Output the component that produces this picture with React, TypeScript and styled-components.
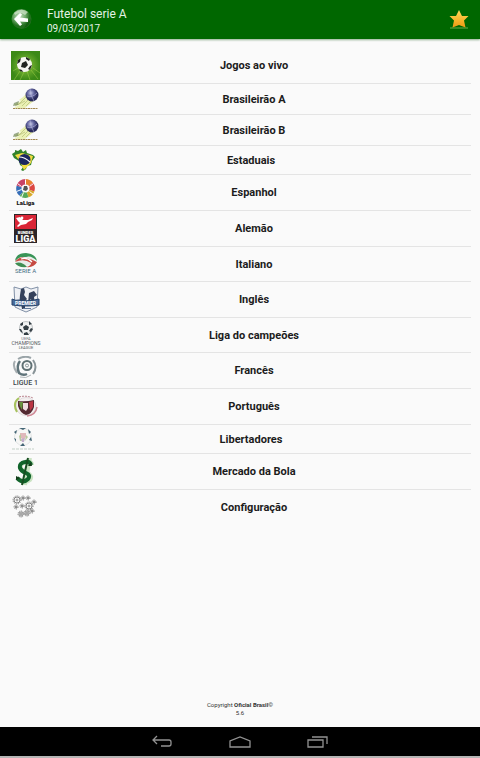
import React from "react";
import styled, { createGlobalStyle } from "styled-components";

const GlobalStyle = createGlobalStyle`
  * { box-sizing: border-box; }
  body { margin: 0; background: #fafafa; font-family: Roboto, "Liberation Sans", sans-serif; color: #1c1c1c; }
  button { border: 0; padding: 0; background: none; font: inherit; color: inherit; cursor: pointer; }
  svg { display: block; }
`;

const Screen = styled.div`
  min-height: 100vh;
  display: flex;
  flex-direction: column;
`;

const TopBar = styled.header`
  display: flex;
  align-items: center;
  height: 39px;
  padding: 0 10px;
  background: #006700;
  color: #e4f2e4;
  box-shadow: 0 1px 2px #8fae8f;
`;

const Titles = styled.div`
  flex: 1;
  padding: 2px 0 0 13px;
`;

const Title = styled.h1`
  margin: 0;
  font-size: 12px;
  line-height: 15px;
  font-weight: 400;
`;

const DateLine = styled.p`
  margin: 0;
  font-size: 10px;
  line-height: 13px;
`;

const Menu = styled.ul`
  list-style: none;
  margin: 9px 9px 0;
  padding: 0;
`;

const MenuItem = styled.li`
  border-bottom: 1px solid #e4e4e4;
  &:last-child { border-bottom-color: transparent; }
`;

const MenuButton = styled.button`
  display: flex;
  align-items: center;
  width: 100%;
  padding: 3px 4px 3px 2px;
`;

const Label = styled.span`
  flex: 1;
  padding-top: 1px;
  font-size: 11px;
  line-height: 16px;
  font-weight: 700;
  text-align: center;
`;

const Footer = styled.footer`
  margin-top: auto;
  padding-bottom: 10px;
  font-size: 6px;
  line-height: 8px;
  text-align: center;
  color: #333;
  p { margin: 0; }
`;

const NavBar = styled.nav`
  display: flex;
  justify-content: center;
  align-items: center;
  gap: 54px;
  height: 31px;
  background: #000;
  border-bottom: 2px solid #b5b5b5;
`;

const BackBall = () => (
  <svg width="24" height="24" viewBox="0 0 24 24" aria-hidden="true">
    <defs>
      <radialGradient id="ball" cx="40%" cy="35%">
        <stop offset="0" stopColor="#c6dfc2" />
        <stop offset="0.6" stopColor="#6ea86a" />
        <stop offset="1" stopColor="#23701f" />
      </radialGradient>
    </defs>
    <circle cx="11.5" cy="11" r="10" fill="url(#ball)" />
    <path d="M4 5Q11 -1 18 4L15 7Q10 3 5 7Z" fill="#d5e8d0" opacity=".7" />
    <path d="M17 15L21 11Q20 18 14 20Z" fill="#074d08" opacity=".5" />
    <path d="M4 11L10 5L12 6.5L10 9.5L18 10.5V14L10 13.5L12 16.5L10 18Z" fill="#fff" />
  </svg>
);

const Star = () => (
  <svg width="22" height="22" viewBox="0 0 22 22" aria-hidden="true">
    <defs>
      <linearGradient id="gold" x2="0" y2="1">
        <stop stopColor="#ffd95e" />
        <stop offset=".6" stopColor="#f7b42a" />
        <stop offset="1" stopColor="#ee9a14" />
      </linearGradient>
    </defs>
    <path d="M2 19H20" stroke="#479532" strokeWidth="1.5" />
    <path d="M11 1L14 7H20.5L16 11.5L17.5 18.5L11 16L4.500 18.500L6 11.5L1.500 7H8Z" fill="url(#gold)" />
  </svg>
);

const LiveBall = () => (
  <>
    <defs>
      <radialGradient id="grass">
        <stop stopColor="#8fc63d" />
        <stop offset="1" stopColor="#3c8917" />
      </radialGradient>
    </defs>
    <path d="M0 0H29V29H0Z" fill="url(#grass)" />
    <path d="M3 29L9 20M9 29L13 21M19 29L16 20M27 28L20 19M2 20L7 17M29 22L22 17" stroke="#a2cf48" opacity=".5" />
    <circle cx="13.5" cy="13.5" r="7.5" fill="#f5f6f0" />
    <path d="M11 12L15 10L17 14L14 17L10 16Z M7 9L10 7L9 11L6 13Z M15 6L19 8L18 10L15 8Z M19 15L21 14L19 19L17 18Z M8 18L11 19L12 21L9 20Z" fill="#20251f" />
  </>
);

const BrasileiraoLogo = ({ id }: { id: string }) => (
  <>
    <defs>
      <radialGradient id={id} cx="40%" cy="35%">
        <stop stopColor="#c4c7e4" />
        <stop offset=".5" stopColor="#6668a2" />
        <stop offset="1" stopColor="#2a2b5c" />
      </radialGradient>
    </defs>
    <path d="M16 6L12 10L8 13L10 14L3 18L8 18L3 21H14L23 14Z" fill="#eaf0b4" />
    <path d="M15 10L7 18M18 12L11 19M14 14L4 19M20 14L15 19" stroke="#b3bd74" strokeWidth=".7" />
    <path d="M3 16L8 14L7 18L2 19Z" fill="#718755" opacity=".7" />
    <circle cx="21" cy="8" r="6.5" fill={`url(#${id})`} />
    <path d="M16 9Q21 11 26 6M19 2Q19 8 23 14" fill="none" stroke="#b8bbdf" strokeWidth=".6" />
    <path d="M2 21.5H27" stroke="#a38950" strokeWidth="1.2" strokeDasharray="2 .5" />
  </>
);

const BrazilMap = () => (
  <>
    <path d="M1 5L4 3V1L7 2L10 0L12 3L15 1L16 4L22 6L24 8L21 12L20 16L16 17L15 20L12 22L10 21L12 18L9 16L8 12L3 9Z" fill="#31822b" />
    <path d="M4 6L11 4L22 7L20 14L13 21L10 15L8 11Z" fill="#f2dc3e" />
    <ellipse cx="13.5" cy="10.5" rx="6" ry="5.5" fill="#1b285f" />
    <path d="M8 8Q14 8 19 13" fill="none" stroke="#fff" strokeWidth="1.1" />
  </>
);

const LaLiga = () => (
  <>
    <g fill="none" strokeWidth="6" transform="translate(14.5 10.5)">
      <path d="M0-6.5A6.5 6.5 0 0 1 5-4" stroke="#e7822e" />
      <path d="M5-4A6.5 6.5 0 0 1 6 2" stroke="#dc4742" />
      <path d="M6 2A6.5 6.5 0 0 1 2 6" stroke="#d7a82a" />
      <path d="M2 6A6.5 6.5 0 0 1-4 5" stroke="#55a957" />
      <path d="M-4 5A6.5 6.5 0 0 1-6-2" stroke="#356db7" />
      <path d="M-6-2A6.5 6.5 0 0 1 0-6.5" stroke="#c94366" />
      <path d="M0-4V-9M4-2L8-5M4 3L8 6M-2 4L-4 9M-4 1L-9 3M-4-2L-8-5" stroke="#fff" strokeWidth="1" />
    </g>
    <circle cx="14.5" cy="10.5" r="4" fill="#f9fafb" />
    <path d="M13 8L16 8L17 11L15 13L12 12Z" fill="#555" />
    <text x="14.5" y="27" textAnchor="middle" fontSize="6" fontWeight="900" fill="#171717">LaLiga</text>
  </>
);

const Bundesliga = () => (
  <>
    <path d="M3 0H26V29H3Z" fill="#2d2527" />
    <path d="M4 1H25V15H4Z" fill="#da2637" />
    <path d="M5 4L9 3L12 6L17 6L22 4L21 6L17 8L15 10L10 11L7 13L6 12L9 9L7 7Z" fill="#fff" />
    <circle cx="11" cy="4" r="1.4" fill="#fff" />
    <text x="14.5" y="19.500" textAnchor="middle" fontSize="4" fontWeight="900" fill="#fff">BUNDES</text>
    <text x="14.5" y="27.500" textAnchor="middle" fontSize="9" fontWeight="900" fill="#fff">LIGA</text>
  </>
);

const SerieA = () => (
  <>
    <ellipse cx="15" cy="11" rx="9" ry="4.5" fill="#e9ece9" />
    <path d="M4 11Q5 3 15 3Q25 4 26 11Q20 5 15 7L10 7Q7 8 4 11Z" fill="#399457" />
    <path d="M4 12Q8 6 14 8Q21 9 26 12Q23 18 15 17Q20 16 20 13Q13 8 4 12Z" fill="#c64b43" />
    <path d="M4 13Q11 11 16 17Q7 18 4 13Z" fill="#408e54" />
    <path d="M10 9Q16 7 21 12" fill="none" stroke="#fff" strokeWidth="1.3" />
    <text x="14.5" y="23" textAnchor="middle" fontSize="6" fill="#426c83">SERIE A</text>
  </>
);

const PremierLeague = () => (
  <>
    <path d="M3 2L10 4L15 2L20 4L27 2L26 22Q20 25 15 27Q10 25 4 22Z" fill="#eff1f5" stroke="#8190a6" />
    <path d="M10 4L13 3L14 7L13 10L16 14L14 16L14 24H11L10 18L8 22L9 10ZM18 8L23 6L26 10L23 12L24 20H21L20 14L17 18Z" fill="#34415c" />
    <path d="M1 14Q5 16 8 15Q16 17 28 14V20Q17 22 1 20Z" fill="#496b99" stroke="#27436a" />
    <text x="14.5" y="19.500" textAnchor="middle" fontSize="5" fontWeight="700" fill="#fff">PREMIER</text>
    <path d="M12 23.5H20" stroke="#61799b" />
  </>
);

const Champions = () => (
  <>
    <circle cx="15" cy="7" r="6.5" fill="#f1f2f2" stroke="#9a9fa2" strokeWidth=".6" />
    <path d="M15 4L18 6L17 9H13L12 6ZM9 3L12 1L12 4L10 5ZM18 0L21 3L18 4ZM8 8L10 8L12 12L10 11ZM20 7L22 8L20 11L18 10ZM13 12L16 11L18 14H13Z" fill="#343e44" />
    <text x="15" y="19" textAnchor="middle" fontSize="4" fill="#687176">UEFA</text>
    <text x="15" y="24" textAnchor="middle" fontSize="5" fill="#535a5d">CHAMPIONS</text>
    <text x="15" y="28" textAnchor="middle" fontSize="4" fill="#535a5d">LEAGUE</text>
  </>
);

const LigueOne = () => (
  <>
    <g fill="none">
      <path d="M7 3Q14-1 20 2" stroke="#9aa4a8" strokeWidth="2" />
      <path d="M4 5Q1 10 6 17" stroke="#a7aeb1" strokeWidth="2" />
      <path d="M9 5Q5 10 8 17Q12 20 16 18" stroke="#60747a" strokeWidth="2.5" />
      <path d="M22 4Q27 11 22 18" stroke="#889397" strokeWidth="2" />
      <path d="M9 21Q15 23 20 19" stroke="#b0b6b8" />
      <circle cx="16" cy="9.5" r="4.5" stroke="#607174" strokeWidth="2" />
      <circle cx="16" cy="9.5" r="1.500" stroke="#8a9798" />
    </g>
    <text x="14.5" y="28.5" textAnchor="middle" fontSize="7" fontWeight="500" fill="#3c454a">LIGUE 1</text>
  </>
);

const Portuguese = () => (
  <>
    <ellipse cx="15" cy="14.5" rx="10" ry="9" fill="#f4f0f0" stroke="#e2d9dc" />
    <path d="M6 20Q1 11 8 6" fill="none" stroke="#a7c25e" strokeWidth="2" />
    <path d="M16 24Q25 23 26 15" fill="none" stroke="#cf8593" strokeWidth="1.5" />
    <path d="M7 9Q15 10 23 8V15Q21 22 15 23Q9 21 7 14Z" fill="#542a32" />
    <path d="M8 10L12 10L11 18Q8 14 8 10Z" fill="#68933e" />
    <path d="M18 10L22 9V15L19 19Z" fill="#bb3443" />
    <path d="M12 11H17V16L15 19L12 17Z" fill="#f1dce0" />
    <path d="M8 5Q15 3 22 6" fill="none" stroke="#b97f8a" strokeDasharray="2 1" />
  </>
);

const Libertadores = () => (
  <>
    <circle cx="12" cy="9" r="8.5" fill="#f7f7f6" stroke="#e4e7e7" />
    <path d="M8 0L15 0L12 2ZM17 1L20 4L18 6ZM3 4L6 2L5 6ZM20 9L21 13L18 12ZM3 10L5 11L5 14ZM9 18L12 15L14 18Z" fill="#446575" />
    <path d="M9 5H15V9L12 12L9 9Z" fill="#e0b8bb" />
    <path d="M8 8L10 6L10 12L14 13L9 13ZM15 7L17 9L14 13Z" fill="#b9ca9e" />
    <path d="M10 11L14 10L13 14H11Z" fill="#c3aecb" />
    <path d="M1 21H23" stroke="#c3d0c7" strokeDasharray="3 1" />
  </>
);

const Dollar = () => (
  <>
    <g fill="none" stroke="#aad49f" strokeWidth="4" opacity=".6">
      <path d="M21 8Q21 4 16 5Q9 6 10 11Q11 14 17 16Q22 19 19 23Q14 27 8 22M19 1L14 28" />
    </g>
    <path d="M20 8Q19 4 14 5Q8 6 9 11Q10 14 15 16Q20 18 17 22Q12 27 6 21" fill="none" stroke="#11642b" strokeWidth="4" />
    <path d="M17 1L11 28" stroke="#184e22" strokeWidth="2" />
    <path d="M20 5L21 9L17 9ZM5 19L9 21L5 23Z" fill="#143d1a" />
  </>
);

const gears = [[6, 7, 3], [18, 13, 3], [10, 21, 2], [16, 20, 2], [12, 5, 1], [17, 5, 1], [23, 9, 1], [11, 13, 1], [21, 18, 1], [5, 14, 1]];
const Gears = () => (
  <>
    {gears.map(([x, y, r]) => (
      <g key={`${x}-${y}`} fill="none" stroke="#6a6a6a">
        <circle cx={x} cy={y} r={r} strokeWidth=".8" />
        <circle cx={x} cy={y} r={r + 1} strokeWidth=".9" strokeDasharray="1 1" />
        <circle cx={x} cy={y} r={r / 3} strokeWidth=".7" />
      </g>
    ))}
  </>
);

const items = [
  { label: "Jogos ao vivo", width: 30, height: 29, art: <LiveBall /> },
  { label: "Brasileirão A", width: 30, height: 24, art: <BrasileiraoLogo id="serie-a" /> },
  { label: "Brasileirão B", width: 30, height: 24, art: <BrasileiraoLogo id="serie-b" /> },
  { label: "Estaduais", width: 24, height: 22, art: <BrazilMap /> },
  { label: "Espanhol", width: 30, height: 29, art: <LaLiga /> },
  { label: "Alemão", width: 30, height: 29, art: <Bundesliga /> },
  { label: "Italiano", width: 30, height: 28, art: <SerieA /> },
  { label: "Inglês", width: 30, height: 29, art: <PremierLeague /> },
  { label: "Liga do campeões", width: 30, height: 28, art: <Champions /> },
  { label: "Francês", width: 30, height: 29, art: <LigueOne /> },
  { label: "Português", width: 30, height: 29, art: <Portuguese /> },
  { label: "Libertadores", width: 24, height: 22, art: <Libertadores /> },
  { label: "Mercado da Bola", width: 30, height: 29, art: <Dollar /> },
  { label: "Configuração", width: 30, height: 28, art: <Gears /> },
];

export default function App() {
  return (
    <Screen>
      <GlobalStyle />
      <TopBar>
        <button aria-label="Voltar"><BackBall /></button>
        <Titles>
          <Title>Futebol serie A</Title>
          <DateLine>09/03/2017</DateLine>
        </Titles>
        <button aria-label="Favoritos"><Star /></button>
      </TopBar>
      <main>
        <Menu>
          {items.map(({ label, width, height, art }) => (
            <MenuItem key={label}>
              <MenuButton>
                <svg width={width} height={height} viewBox={`0 0 ${width} ${height}`} aria-hidden="true">{art}</svg>
                <Label>{label}</Label>
              </MenuButton>
            </MenuItem>
          ))}
        </Menu>
      </main>
      <Footer>
        <p>Copyright <strong>Oficial Brasil</strong>©</p>
        <p>5.6</p>
      </Footer>
      <NavBar aria-label="Sistema">
        <button aria-label="Voltar à tela anterior">
          <svg width="24" height="16" viewBox="0 0 24 16" fill="none" stroke="#929292" strokeWidth="1.3">
            <path d="M7 2L3 6L7 10M3 6H19Q21 6 21 8V10Q21 12 19 12H11" />
          </svg>
        </button>
        <button aria-label="Início">
          <svg width="24" height="16" viewBox="0 0 24 16" fill="none" stroke="#929292" strokeWidth="1.3">
            <path d="M2 13V7L12 3L22 7V13Z" />
          </svg>
        </button>
        <button aria-label="Aplicativos recentes">
          <svg width="24" height="16" viewBox="0 0 24 16" fill="none" stroke="#929292" strokeWidth="1.3">
            <path d="M2 6H17V13H2ZM6 3H21V10" />
          </svg>
        </button>
      </NavBar>
    </Screen>
  );
}
